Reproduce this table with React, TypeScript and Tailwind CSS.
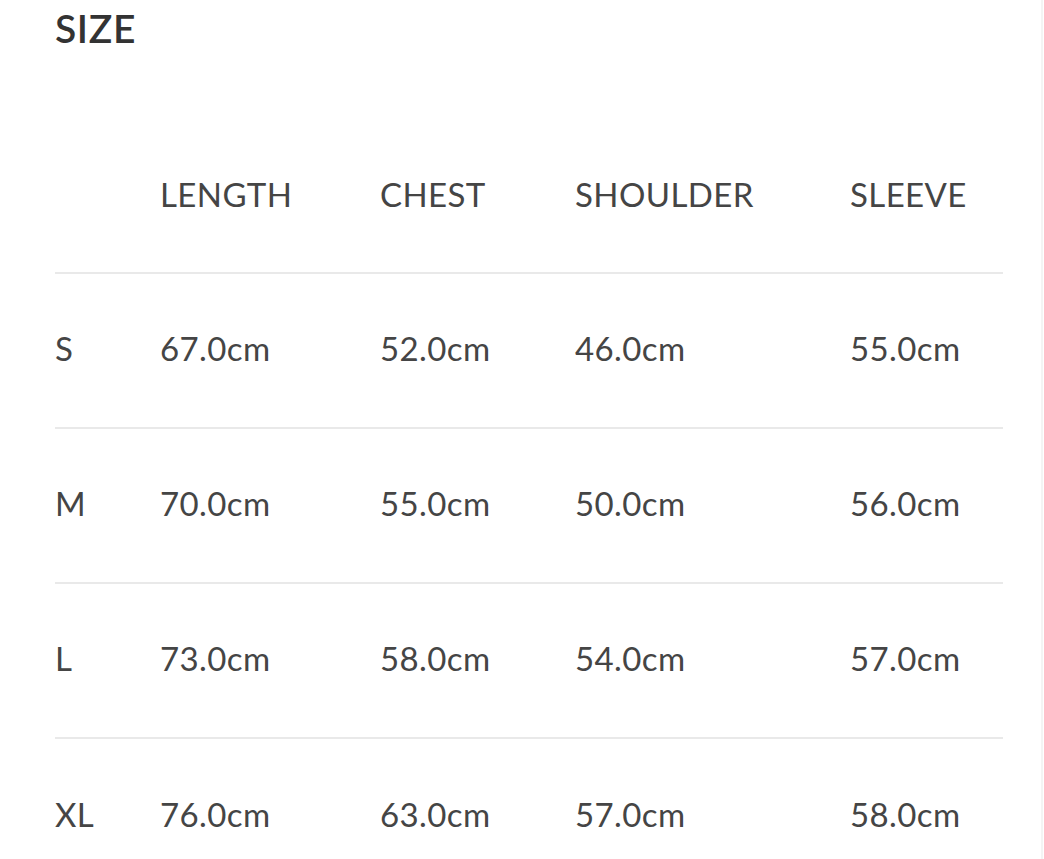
import React from 'react'

const headers = ['LENGTH', 'CHEST', 'SHOULDER', 'SLEEVE']

const rows = [
    { size: 'S', values: ['67.0cm', '52.0cm', '46.0cm', '55.0cm'] },
    { size: 'M', values: ['70.0cm', '55.0cm', '50.0cm', '56.0cm'] },
    { size: 'L', values: ['73.0cm', '58.0cm', '54.0cm', '57.0cm'] },
    { size: 'XL', values: ['76.0cm', '63.0cm', '57.0cm', '58.0cm'] },
]

// column widths read off the chart
const cols = 'grid grid-cols-[105px_220px_195px_275px_1fr] items-center'

function SizeChart() {
    return (
        <div className="w-[1044px] h-[859px] bg-white overflow-hidden text-[#454545] font-['Lato',sans-serif] flex">
            <div className="flex-1 pl-[55px] pr-[38px]">
                <h2 className="mt-[4px] h-[49px] text-[39px] font-semibold leading-[49px] tracking-[0.6px] text-[#333]">SIZE</h2>

                <div className="mt-[65px]">
                    {/* header row */}
                    <div className={`${cols} h-[156px] border-b-2 border-[#e9e9e9] text-[33px] tracking-[0.4px]`}>
                        <span />
                        {headers.map((h) => (
                            <span key={h}>{h}</span>
                        ))}
                    </div>

                    {rows.map((row, i) => (
                        <div
                            key={row.size}
                            className={`${cols} h-[155px] pb-[3px] text-[33px] tracking-[0.4px] ${i < rows.length - 1 ? 'border-b-2 border-[#e9e9e9]' : ''}`}
                        >
                            <span>{row.size}</span>
                            {row.values.map((v, j) => (
                                <span key={j}>{v}</span>
                            ))}
                        </div>
                    ))}
                </div>
            </div>
            <div className="w-[2px] bg-[#f4f4f4] mr-[1px]" />
        </div>
    )
}

export default function App() {
    return <SizeChart />
}
